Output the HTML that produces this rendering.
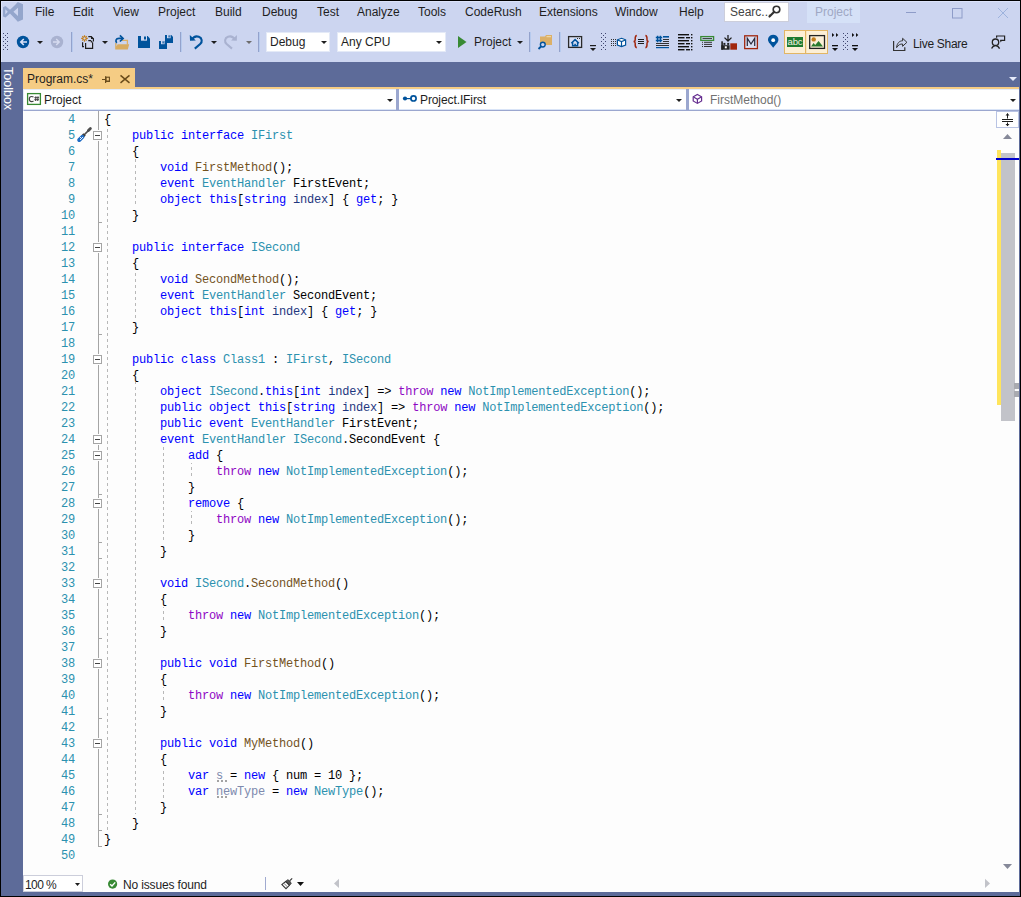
<!DOCTYPE html>
<html><head><meta charset="utf-8">
<style>
*{margin:0;padding:0;box-sizing:border-box}
html,body{width:1021px;height:897px;overflow:hidden;background:#000}
body{position:relative;font-family:"Liberation Sans",sans-serif;font-size:12px;color:#1E1E1E}
.a{position:absolute}
#frame{position:absolute;left:1px;top:1px;width:1019px;height:895px;background:#CCD5F0}
.menu{position:absolute;top:4px;font-size:12px;line-height:16px;color:#1E1E1E;white-space:nowrap}
.sep{position:absolute;width:1px;background:#9BA7CF}
.arr{position:absolute;width:0;height:0;border-left:3px solid transparent;border-right:3px solid transparent;border-top:3px solid #1E1E1E}
.combo{position:absolute;background:#fff;top:32px;height:20px;border:1px solid #E4EAF7}
#tabwell{position:absolute;left:1px;top:62px;width:1019px;height:834px;background:#5D6B99}
#code{position:absolute;left:104px;top:112px;font-family:"Liberation Mono",monospace;font-size:12px;letter-spacing:-0.2px;line-height:16px;white-space:pre;color:#000}
#lnum{position:absolute;left:40px;width:35px;top:112px;font-family:"Liberation Mono",monospace;font-size:12px;letter-spacing:-0.2px;line-height:16px;white-space:pre;color:#2B91AF;text-align:right}
.dg{position:absolute;width:1px;background-image:repeating-linear-gradient(to bottom,transparent 0 3px,#B8B8B8 3px 6px)}
.k{color:#0000FF}.t{color:#2B91AF}.m{color:#74531F}.c{color:#8F08C4}.p{color:#1F377F}.g{color:#7E8AAE}
</style></head><body>
<div id="frame"></div>
<!-- menu -->
<div class="menu" style="left:35px">File</div>
<div class="menu" style="left:73px">Edit</div>
<div class="menu" style="left:113px">View</div>
<div class="menu" style="left:158px">Project</div>
<div class="menu" style="left:215px">Build</div>
<div class="menu" style="left:262px">Debug</div>
<div class="menu" style="left:317px">Test</div>
<div class="menu" style="left:357px">Analyze</div>
<div class="menu" style="left:418px">Tools</div>
<div class="menu" style="left:465px">CodeRush</div>
<div class="menu" style="left:539px">Extensions</div>
<div class="menu" style="left:615px">Window</div>
<div class="menu" style="left:679px">Help</div>
<div class="a" style="left:724px;top:2px;width:65px;height:20px;background:#fff;border:1px solid #CCCEDB"></div>
<div class="menu" style="left:730px;color:#444">Searc...</div>
<div class="a" style="left:807px;top:2px;width:53px;height:21px;background:#D5E1F7"></div>
<div class="menu" style="left:815px;color:#A0A8C4">Project</div>

<!-- toolbar -->
<div class="combo" style="left:266px;width:64px"></div>
<div class="menu" style="left:270px;top:34px">Debug</div>
<div class="combo" style="left:337px;width:109px"></div>
<div class="menu" style="left:341px;top:34px">Any CPU</div>
<div class="menu" style="left:474px;top:34px">Project</div>
<div class="menu" style="left:913px;top:36px;letter-spacing:-0.3px">Live Share</div>

<!-- tab well -->
<div id="tabwell"></div>
<div class="a" style="left:23px;top:68px;width:112px;height:21px;background:#F5CC84"></div>
<div class="a" style="left:23px;top:87px;width:996px;height:2px;background:#F5CC84"></div>
<div class="menu" style="left:27px;top:71px">Program.cs*</div>

<div class="a" style="left:16px;top:67px;font-size:12.5px;line-height:16px;color:#fff;white-space:nowrap;transform:rotate(90deg);transform-origin:0 0">Toolbox</div>
<!-- nav bar -->
<div class="a" style="left:23px;top:89px;width:996px;height:22px;background:#fff;border-top:1px solid #E3ECFA;border-left:1px solid #E3ECFA;border-bottom:1px solid #9BA7CF"></div><div class="a" style="left:23px;top:109px;width:996px;height:1px;background:#D9E4F7"></div>
<div class="a" style="left:396px;top:89px;width:3px;height:21px;background:#9BA7CF"></div>
<div class="a" style="left:686px;top:89px;width:3px;height:21px;background:#9BA7CF"></div>
<div class="menu" style="left:44px;top:92px">Project</div>
<div class="menu" style="left:420px;top:92px;letter-spacing:-0.1px">Project.IFirst</div>
<div class="menu" style="left:710px;top:92px;color:#717171">FirstMethod()</div>

<!-- editor -->
<div class="a" style="left:23px;top:111px;width:996px;height:781px;background:#FDFDFD"></div>

<!--GUTTER-->
<div class="a" style="left:98px;top:111px;width:1px;height:19px;background:#A5A5A5"></div>
<div class="a" style="left:98px;top:141px;width:1px;height:101px;background:#A5A5A5"></div>
<div class="a" style="left:98px;top:253px;width:1px;height:101px;background:#A5A5A5"></div>
<div class="a" style="left:98px;top:365px;width:1px;height:69px;background:#A5A5A5"></div>
<div class="a" style="left:98px;top:445px;width:1px;height:5px;background:#A5A5A5"></div>
<div class="a" style="left:98px;top:461px;width:1px;height:37px;background:#A5A5A5"></div>
<div class="a" style="left:98px;top:509px;width:1px;height:69px;background:#A5A5A5"></div>
<div class="a" style="left:98px;top:589px;width:1px;height:69px;background:#A5A5A5"></div>
<div class="a" style="left:98px;top:669px;width:1px;height:69px;background:#A5A5A5"></div>
<div class="a" style="left:98px;top:749px;width:1px;height:98px;background:#A5A5A5"></div>
<div class="a" style="left:93px;top:131px;width:9px;height:9px;border:1px solid #A5A5A5;background:#fff"></div>
<div class="a" style="left:95px;top:135px;width:5px;height:1px;background:#444"></div>
<div class="a" style="left:93px;top:243px;width:9px;height:9px;border:1px solid #A5A5A5;background:#fff"></div>
<div class="a" style="left:95px;top:247px;width:5px;height:1px;background:#444"></div>
<div class="a" style="left:93px;top:355px;width:9px;height:9px;border:1px solid #A5A5A5;background:#fff"></div>
<div class="a" style="left:95px;top:359px;width:5px;height:1px;background:#444"></div>
<div class="a" style="left:93px;top:435px;width:9px;height:9px;border:1px solid #A5A5A5;background:#fff"></div>
<div class="a" style="left:95px;top:439px;width:5px;height:1px;background:#444"></div>
<div class="a" style="left:93px;top:451px;width:9px;height:9px;border:1px solid #A5A5A5;background:#fff"></div>
<div class="a" style="left:95px;top:455px;width:5px;height:1px;background:#444"></div>
<div class="a" style="left:93px;top:499px;width:9px;height:9px;border:1px solid #A5A5A5;background:#fff"></div>
<div class="a" style="left:95px;top:503px;width:5px;height:1px;background:#444"></div>
<div class="a" style="left:93px;top:579px;width:9px;height:9px;border:1px solid #A5A5A5;background:#fff"></div>
<div class="a" style="left:95px;top:583px;width:5px;height:1px;background:#444"></div>
<div class="a" style="left:93px;top:659px;width:9px;height:9px;border:1px solid #A5A5A5;background:#fff"></div>
<div class="a" style="left:95px;top:663px;width:5px;height:1px;background:#444"></div>
<div class="a" style="left:93px;top:739px;width:9px;height:9px;border:1px solid #A5A5A5;background:#fff"></div>
<div class="a" style="left:95px;top:743px;width:5px;height:1px;background:#444"></div>
<div class="a" style="left:99px;top:222px;width:3px;height:1px;background:#A5A5A5"></div>
<div class="a" style="left:99px;top:334px;width:3px;height:1px;background:#A5A5A5"></div>
<div class="a" style="left:99px;top:830px;width:3px;height:1px;background:#A5A5A5"></div>
<div class="a" style="left:99px;top:558px;width:3px;height:1px;background:#A5A5A5"></div>
<div class="a" style="left:99px;top:494px;width:3px;height:1px;background:#A5A5A5"></div>
<div class="a" style="left:99px;top:542px;width:3px;height:1px;background:#A5A5A5"></div>
<div class="a" style="left:99px;top:638px;width:3px;height:1px;background:#A5A5A5"></div>
<div class="a" style="left:99px;top:718px;width:3px;height:1px;background:#A5A5A5"></div>
<div class="a" style="left:99px;top:814px;width:3px;height:1px;background:#A5A5A5"></div>
<div class="a" style="left:99px;top:846px;width:3px;height:1px;background:#A5A5A5"></div>
<div class="a dg" style="left:107px;top:126px;height:704px;background-position:0 -126px"></div>
<div class="a dg" style="left:135px;top:158px;height:48px;background-position:0 -158px"></div>
<div class="a dg" style="left:135px;top:270px;height:48px;background-position:0 -270px"></div>
<div class="a dg" style="left:135px;top:382px;height:432px;background-position:0 -382px"></div>
<div class="a dg" style="left:163px;top:446px;height:96px;background-position:0 -446px"></div>
<div class="a dg" style="left:191px;top:462px;height:16px;background-position:0 -462px"></div>
<div class="a dg" style="left:191px;top:510px;height:16px;background-position:0 -510px"></div>
<div class="a dg" style="left:163px;top:606px;height:16px;background-position:0 -606px"></div>
<div class="a dg" style="left:163px;top:686px;height:16px;background-position:0 -686px"></div>
<div class="a dg" style="left:163px;top:766px;height:32px;background-position:0 -766px"></div>
<!--/GUTTER-->
<div id="lnum">4
5
6
7
8
9
10
11
12
13
14
15
16
17
18
19
20
21
22
23
24
25
26
27
28
29
30
31
32
33
34
35
36
37
38
39
40
41
42
43
44
45
46
47
48
49
50</div>
<div id="code">{
    <span class="k">public interface</span> <span class="t">IFirst</span>
    {
        <span class="k">void</span> <span class="m">FirstMethod</span>();
        <span class="k">event</span> <span class="t">EventHandler</span> FirstEvent;
        <span class="k">object this</span>[<span class="k">string</span> <span class="p">index</span>] { <span class="k">get</span>; }
    }

    <span class="k">public interface</span> <span class="t">ISecond</span>
    {
        <span class="k">void</span> <span class="m">SecondMethod</span>();
        <span class="k">event</span> <span class="t">EventHandler</span> SecondEvent;
        <span class="k">object this</span>[<span class="k">int</span> <span class="p">index</span>] { <span class="k">get</span>; }
    }

    <span class="k">public class</span> <span class="t">Class1</span> : <span class="t">IFirst</span>, <span class="t">ISecond</span>
    {
        <span class="k">object</span> <span class="t">ISecond</span>.<span class="k">this</span>[<span class="k">int</span> <span class="p">index</span>] =&gt; <span class="c">throw</span> <span class="k">new</span> <span class="t">NotImplementedException</span>();
        <span class="k">public object this</span>[<span class="k">string</span> <span class="p">index</span>] =&gt; <span class="c">throw</span> <span class="k">new</span> <span class="t">NotImplementedException</span>();
        <span class="k">public event</span> <span class="t">EventHandler</span> FirstEvent;
        <span class="k">event</span> <span class="t">EventHandler</span> <span class="t">ISecond</span>.SecondEvent {
            <span class="k">add</span> {
                <span class="c">throw</span> <span class="k">new</span> <span class="t">NotImplementedException</span>();
            }
            <span class="k">remove</span> {
                <span class="c">throw</span> <span class="k">new</span> <span class="t">NotImplementedException</span>();
            }
        }

        <span class="k">void</span> <span class="t">ISecond</span>.<span class="m">SecondMethod</span>()
        {
            <span class="c">throw</span> <span class="k">new</span> <span class="t">NotImplementedException</span>();
        }

        <span class="k">public void</span> <span class="m">FirstMethod</span>()
        {
            <span class="c">throw</span> <span class="k">new</span> <span class="t">NotImplementedException</span>();
        }

        <span class="k">public void</span> <span class="m">MyMethod</span>()
        {
            <span class="k">var</span> <span class="g">s</span> = <span class="k">new</span> { num = 10 };
            <span class="k">var</span> <span class="g">newType</span> = <span class="k">new</span> <span class="t">NewType</span>();
        }
    }
}
</div>

<!-- status bar -->
<div class="a" style="left:23px;top:875px;width:60px;height:17px;background:#fff;border:1px solid #CCCEDB"></div>
<div class="menu" style="left:25px;top:877px;letter-spacing:-0.6px">100 %</div>
<div class="menu" style="left:123px;top:877px;letter-spacing:-0.15px">No issues found</div>
<!--ICONS-->
<svg class="a" style="left:0;top:0" width="1021" height="897" viewBox="0 0 1021 897">
<!-- window highlight -->
<rect x="1" y="1" width="1019" height="1" fill="#DCE3FA"/>
<rect x="1" y="1" width="1" height="61" fill="#DCE3FA"/>
<!-- VS logo -->
<path fill="#94A6CC" fill-rule="evenodd" d="M3,7.3 L5.5,6 L10,9.8 L15.3,4.8 L17.8,2 L23,4.2 L23,19.6 L17.8,21.8 L15.3,19 L10,13.6 L5.5,17.6 L3,16.4 Z M5.3,9.2 L7.8,11.8 L5.3,14.5 Z M18,7.8 L13.4,11.8 L18,15.9 Z"/>
<!-- window buttons -->
<rect x="906" y="12" width="10" height="1" fill="#8E9CC8"/>
<rect x="952.5" y="8.5" width="9.5" height="9.5" fill="none" stroke="#8E9CC8" stroke-width="1"/>
<path d="M998,8 L1008,18 M1008,8 L998,18" stroke="#9DB3DD" stroke-width="1"/>
<!-- search magnifier -->
<circle cx="776.5" cy="9.5" r="3.3" fill="none" stroke="#333" stroke-width="1.6"/>
<path d="M774,12 L769.5,16.5" stroke="#333" stroke-width="2.2" stroke-linecap="round"/>
<!-- grips -->
<g fill="#3F4570">
<rect x="3" y="33" width="1" height="1"/><rect x="7" y="33" width="1" height="1"/><rect x="5" y="35" width="1" height="1"/>
<rect x="3" y="37" width="1" height="1"/><rect x="7" y="37" width="1" height="1"/><rect x="5" y="39" width="1" height="1"/>
<rect x="3" y="41" width="1" height="1"/><rect x="7" y="41" width="1" height="1"/><rect x="5" y="43" width="1" height="1"/>
<rect x="3" y="45" width="1" height="1"/><rect x="7" y="45" width="1" height="1"/><rect x="5" y="47" width="1" height="1"/>
<rect x="3" y="49" width="1" height="1"/><rect x="7" y="49" width="1" height="1"/>
<rect x="601" y="33" width="1" height="1"/><rect x="605" y="33" width="1" height="1"/><rect x="603" y="35" width="1" height="1"/>
<rect x="601" y="37" width="1" height="1"/><rect x="605" y="37" width="1" height="1"/><rect x="603" y="39" width="1" height="1"/>
<rect x="601" y="41" width="1" height="1"/><rect x="605" y="41" width="1" height="1"/><rect x="603" y="43" width="1" height="1"/>
<rect x="601" y="45" width="1" height="1"/><rect x="605" y="45" width="1" height="1"/><rect x="603" y="47" width="1" height="1"/>
<rect x="601" y="49" width="1" height="1"/><rect x="605" y="49" width="1" height="1"/>
<rect x="843" y="33" width="1" height="1"/><rect x="847" y="33" width="1" height="1"/><rect x="845" y="35" width="1" height="1"/>
<rect x="843" y="37" width="1" height="1"/><rect x="847" y="37" width="1" height="1"/><rect x="845" y="39" width="1" height="1"/>
<rect x="843" y="41" width="1" height="1"/><rect x="847" y="41" width="1" height="1"/><rect x="845" y="43" width="1" height="1"/>
<rect x="843" y="45" width="1" height="1"/><rect x="847" y="45" width="1" height="1"/><rect x="845" y="47" width="1" height="1"/>
<rect x="843" y="49" width="1" height="1"/><rect x="847" y="49" width="1" height="1"/>
</g>
<!-- back / forward -->
<circle cx="23" cy="42" r="6.2" fill="#00539C"/>
<path d="M27,42 H21.5 M23.8,39 L20.8,42 L23.8,45" stroke="#DCE3F7" stroke-width="1.6" fill="none"/>
<path d="M37,41 H43 L40,44 Z" fill="#1E1E1E"/>
<circle cx="57" cy="42" r="6.2" fill="#A9B2D0"/>
<path d="M53,42 H58.5 M56.2,39 L59.2,42 L56.2,45" stroke="#D6DCF0" stroke-width="1.4" fill="none"/>
<!-- separators -->
<g fill="#93A2CC">
<rect x="71" y="32" width="1" height="20"/><rect x="180" y="32" width="1" height="20"/><rect x="258" y="32" width="1" height="20"/>
<rect x="529" y="32" width="1" height="20"/><rect x="559" y="32" width="1" height="20"/>
</g>
<g fill="#B6CAEE"><rect x="72" y="32" width="1" height="20"/><rect x="181" y="32" width="1" height="20"/><rect x="259" y="32" width="1" height="20"/><rect x="530" y="32" width="1" height="20"/><rect x="560" y="32" width="1" height="20"/></g>
<!-- new project -->
<g stroke="#C27D1A" stroke-width="1.2" fill="none">
<path d="M81.2,38.4 H87.8 M84.5,35.2 V41.8 M82.3,36.3 L86.7,40.5 M86.7,36.3 L82.3,40.5"/>
</g>
<circle cx="84.5" cy="38.4" r="1.1" fill="#CCD5F0"/>
<path d="M88.3,36.6 H91.2 L93.4,38.8 V41.4" stroke="#1E1E1E" stroke-width="1.2" fill="none"/>
<path d="M91,36 L94,39 H91 Z" fill="#1E1E1E"/>
<path d="M85.6,43 V48.4 H92.6 V42.6 L91,41 H88.3 V43 Z" fill="#D3D8EE"/>
<path d="M85.6,43 V48.4 H92.6 V42.6 M88.3,40.6 H91" stroke="#1E1E1E" stroke-width="1.2" fill="none"/>
<path d="M90.8,40 L93.2,42.4 H90.8 Z" fill="#1E1E1E"/>
<path d="M82.6,42.3 V46.6 H84" stroke="#1E1E1E" stroke-width="1.2" fill="none"/>
<path d="M102,41 H108 L105,44 Z" fill="#1E1E1E"/>
<!-- open folder -->
<path d="M121.8,40.4 H127.4 V44.5" stroke="#DCB067" stroke-width="1.3" fill="none"/>
<path d="M115.2,43 V49.6 H127.8 L129.2,44.2 H117.6 L116.5,46.5 V43 Z" fill="#D8AC62"/>
<path d="M116.8,42.8 C115.3,41.3 115.6,38.5 119,38.4 H122.6" stroke="#00539C" stroke-width="1.7" fill="none"/>
<path d="M119.9,35.3 L123.1,38.4 L119.9,41.5" stroke="#00539C" stroke-width="1.7" fill="none"/>
<!-- save -->
<path d="M138,36 H147.6 L150,38.4 V48 H138 Z" fill="#00539C"/>
<rect x="141" y="36" width="6" height="4.7" fill="#D0D8F0"/>
<rect x="144" y="36.5" width="2" height="3" fill="#00539C"/>
<!-- save all -->
<path d="M165,35 H171.3 L173,36.7 V43 H165 Z" fill="#00539C"/>
<rect x="167" y="35" width="3.6" height="3.2" fill="#D0D8F0"/><rect x="168.5" y="35.3" width="1.2" height="2.2" fill="#00539C"/>
<path d="M159,41 H165.3 L167,42.7 V49 H159 Z" fill="#00539C" stroke="#CCD5F0" stroke-width="0"/>
<rect x="161" y="41" width="3.6" height="3.2" fill="#D0D8F0"/><rect x="162.5" y="41.3" width="1.2" height="2.2" fill="#00539C"/>
<!-- undo -->
<path d="M191.8,39.8 C193.5,36.8 196.5,36 198.8,36.8 C202.3,38 202.5,42 200.2,44 L194.8,48.6" stroke="#00539C" stroke-width="2.1" fill="none"/>
<path d="M189.8,35 L190,40.8 L195.8,40.6 Z" fill="#00539C"/>
<path d="M211,41 H217 L214,44 Z" fill="#1E1E1E"/>
<!-- redo -->
<path d="M235,39.8 C233.3,36.8 230.3,36 228,36.8 C224.5,38 224.3,42 226.6,44 L232,48.6" stroke="#A9B2D0" stroke-width="2.1" fill="none"/>
<path d="M237,35 L236.8,40.8 L231,40.6 Z" fill="#A9B2D0"/>
<path d="M246,41 H252 L249,44 Z" fill="#6D6D6D"/>
<!-- combo arrows -->
<path d="M321,41 H327 L324,44 Z" fill="#1E1E1E"/>
<path d="M436,41 H442 L439,44 Z" fill="#1E1E1E"/>
<!-- play -->
<path d="M458,36 V48 L466.5,42 Z" fill="#388A34"/>
<path d="M517,41 H523 L520,44 Z" fill="#1E1E1E"/>
<!-- find in files -->
<path d="M540,36.5 H545 L546,35 H552 V45 H540 Z" fill="#DCB067"/>
<path d="M546.5,36.7 H551" stroke="#F2DFB5" stroke-width="1"/>
<circle cx="542.8" cy="44.6" r="2.4" fill="#CCD5F0" stroke="#00539C" stroke-width="1.4"/>
<path d="M541,46.5 L538.5,49" stroke="#00539C" stroke-width="1.8"/>
<!-- home window -->
<rect x="568.6" y="36.6" width="13" height="10.8" fill="#D9E0F4" stroke="#2A2A2A" stroke-width="1.3"/>
<path d="M571.3,43.2 L575.1,39.6 L578.9,43.2 M572.6,42.4 V45.8 H577.6 V42.4" stroke="#00539C" stroke-width="1.5" fill="none"/>
<rect x="574.3" y="43.8" width="1.6" height="2" fill="#00539C"/>
<rect x="577" y="38" width="1" height="1" fill="#333"/><rect x="579" y="38" width="1" height="1" fill="#333"/>
<rect x="590" y="45" width="6" height="1.2" fill="#1E1E1E"/>
<path d="M590,48 H596 L593,51 Z" fill="#1E1E1E"/>
<!-- grid + cube -->
<g fill="#333">
<rect x="611" y="39" width="1" height="1"/><rect x="613" y="39" width="1" height="1"/><rect x="615" y="39" width="1" height="1"/>
<rect x="611" y="41" width="1" height="1"/><rect x="613" y="41" width="1" height="1"/><rect x="615" y="41" width="1" height="1"/>
<rect x="611" y="43" width="1" height="1"/><rect x="613" y="43" width="1" height="1"/><rect x="615" y="43" width="1" height="1"/>
<rect x="611" y="45" width="1" height="1"/><rect x="613" y="45" width="1" height="1"/><rect x="615" y="45" width="1" height="1"/>
</g>
<path d="M621.5,38.3 L625.6,39.8 V45 L621.5,46.6 L617.4,45 V39.8 Z" fill="#fff" stroke="#00539C" stroke-width="1.2"/>
<path d="M617.6,40 L621.5,41.5 L625.4,40 M621.5,41.5 V46.4" stroke="#00539C" stroke-width="1.2" fill="none"/>
<!-- {=} -->
<path d="M636.8,35.4 C634.8,35.6 635.2,38 635.2,40 C635.2,41 634.6,41.5 633.6,41.6 C634.6,41.7 635.2,42.2 635.2,43.2 C635.2,45.2 634.8,47.6 636.8,47.8" stroke="#A1260D" stroke-width="1.5" fill="none"/>
<path d="M645.4,35.4 C647.4,35.6 647,38 647,40 C647,41 647.6,41.5 648.6,41.6 C647.6,41.7 647,42.2 647,43.2 C647,45.2 647.4,47.6 645.4,47.8" stroke="#A1260D" stroke-width="1.5" fill="none"/>
<g fill="#1E1E1E"><rect x="638" y="39" width="6" height="1"/><rect x="638" y="41" width="6" height="1"/><rect x="638" y="43" width="6" height="1"/></g>
<!-- #= -->
<path d="M657.6,35.8 V42.2 M660.4,35.8 V42.2 M655.8,37.6 H662.2 M655.8,40.4 H662.2" stroke="#00539C" stroke-width="1.5" fill="none"/>
<rect x="663" y="36" width="6" height="1.6" fill="#00539C"/>
<path d="M663,39.5 H669 M663,41.5 H669 M656,43.5 H669 M656,45.5 H669" stroke="#333" stroke-width="1"/>
<rect x="656" y="47" width="13" height="1.2" fill="#00539C"/>
<!-- lines icon -->
<g fill="#111"><rect x="678" y="34" width="11" height="1.4"/><rect x="691" y="34" width="1.4" height="1.4"/><rect x="678" y="37" width="6.5" height="1.4"/><rect x="686" y="37" width="4" height="1.4"/><rect x="691" y="37" width="1.4" height="1.4"/><rect x="678" y="40" width="11" height="1.4"/><rect x="691" y="40" width="1.4" height="1.4"/><rect x="678" y="43" width="6.5" height="1.4"/><rect x="686" y="43" width="4" height="1.4"/><rect x="691" y="43" width="1.4" height="1.4"/><rect x="678" y="46" width="11" height="1.4"/><rect x="691" y="46" width="1.4" height="1.4"/><rect x="678" y="49" width="6.5" height="1.4"/><rect x="686" y="49" width="4" height="1.4"/><rect x="691" y="49" width="1.4" height="1.4"/></g>
<!-- green box list -->
<rect x="700.8" y="36.6" width="12.8" height="3.8" fill="none" stroke="#388A34" stroke-width="1.3"/>
<path d="M702.5,38.5 H712" stroke="#333" stroke-width="0.9"/>
<path d="M704,42.3 H712 M704,44.4 H712 M704,46.5 H712" stroke="#333" stroke-width="1"/>
<g fill="#333"><rect x="702" y="41.8" width="1" height="1"/><rect x="702" y="43.9" width="1" height="1"/><rect x="702" y="46" width="1" height="1"/></g>
<!-- download -->
<path d="M728,35 V40.5 M724.5,37.6 L728,41 L731.5,37.6" stroke="#1E1E1E" stroke-width="1.3" fill="none"/>
<rect x="721.3" y="41.3" width="1.6" height="8.4" fill="#222"/>
<rect x="721.3" y="45.2" width="8.3" height="4.5" fill="#222"/>
<rect x="723.4" y="42.9" width="2" height="2" fill="#222"/><rect x="727.2" y="42.9" width="2" height="2" fill="#222"/>
<rect x="724.8" y="46.3" width="2" height="2" fill="#fff"/>
<rect x="730.3" y="43.3" width="6.7" height="6.4" fill="#A1260D"/>
<!-- M -->
<rect x="744.7" y="35.8" width="12.7" height="12.8" fill="#D9E0F4" stroke="#A1260D" stroke-width="1.3"/>
<path d="M747.3,46 V38.3 L751,44 L754.7,38.3 V46" stroke="#2A2A3A" stroke-width="1.2" fill="none"/>
<!-- pin -->
<path d="M773.2,47.8 L768.8,42.3 C766.8,39.5 768.6,34.8 773.2,34.8 C777.8,34.8 779.6,39.5 777.6,42.3 Z" fill="#00539C"/>
<circle cx="773.2" cy="40.2" r="1.9" fill="#fff"/>
<!-- abc / image buttons -->
<rect x="784.5" y="30.5" width="43" height="23" fill="#FCEFD6" stroke="#E2B665" stroke-width="1"/>
<rect x="805" y="30.5" width="1.2" height="23" fill="#E2B665"/>
<rect x="787" y="37" width="16" height="10" fill="#1F7A2F"/>
<text x="795" y="44.8" font-family="Liberation Sans" font-size="9.5" fill="#F4F0E0" text-anchor="middle" letter-spacing="-0.1">abc</text>
<rect x="809.7" y="35.6" width="14.8" height="12.8" fill="#FCEFD6" stroke="#222" stroke-width="1.3"/>
<circle cx="813.7" cy="39.4" r="2.2" fill="#C27D1A"/>
<path d="M811,46.6 L813.6,43 L815.2,45 L818.6,41 L823,46.6 Z" fill="#2A7A2E"/>
<!-- overflow arrows -->
<path d="M832,33 L834.3,35 L832,37 Z M836,33 L838.3,35 L836,37 Z" fill="#111"/>
<rect x="832" y="45" width="6" height="1.3" fill="#111"/>
<path d="M832,48 H838 L835,51 Z" fill="#111"/>
<path d="M852,33 L854.3,35 L852,37 Z M856,33 L858.3,35 L856,37 Z" fill="#111"/>
<rect x="852" y="45" width="6" height="1.3" fill="#111"/>
<path d="M852,48 H858 L855,51 Z" fill="#111"/>
<!-- share -->
<path d="M893.6,41 V50.5 H904.8 V47.3" stroke="#333" stroke-width="1.2" fill="none"/>
<path d="M896.6,47.6 C897,43.2 899.4,40.8 902.6,40.8 V38.3 L906.9,42.3 L902.6,46.3 V44 C900.2,43.8 898.2,45 896.6,47.6 Z" stroke="#333" stroke-width="1" fill="none"/>
<!-- feedback -->
<circle cx="995.5" cy="42.2" r="3.2" fill="none" stroke="#222" stroke-width="1.3"/>
<path d="M991.6,48.6 C992.6,46.3 993.8,45.6 995.5,45.6 C997.2,45.6 998.5,46.3 999.6,48.6" stroke="#222" stroke-width="1.3" fill="none"/>
<path d="M996.6,37.8 V36 H1004.6 V40.4 H1000.2" stroke="#222" stroke-width="1.2" fill="none"/>
<path d="M1000.2,40.2 H1002.4 L1000.4,42.4 Z" fill="#222"/>
<!-- tab pin & close -->
<path d="M102,79.5 H105.5 M105.6,76.3 V83" stroke="#6A4C1C" stroke-width="1.2"/>
<rect x="106" y="77.2" width="3.4" height="4.2" fill="none" stroke="#6A4C1C" stroke-width="1.1"/>
<rect x="106" y="80.6" width="4" height="1.3" fill="#6A4C1C"/>
<path d="M120.5,75.4 L129.5,82.8 M129.5,75.4 L120.5,82.8" stroke="#6A4C1C" stroke-width="1.5"/>
<!-- tab well dropdown -->
<path d="M1009,77 H1017 L1013,81 Z" fill="#E6EBFA"/>
<!-- nav bar icons -->
<rect x="27.6" y="93.6" width="12.8" height="10.8" fill="#fff" stroke="#388A34" stroke-width="1.3"/>
<path d="M33.5,97.2 C33,96.7 32.4,96.5 31.6,96.5 C30.1,96.5 29.3,97.6 29.3,99.1 C29.3,100.6 30.1,101.6 31.6,101.6 C32.4,101.6 33,101.4 33.5,100.9" stroke="#424242" stroke-width="1.2" fill="none"/><path d="M35.9,96.3 L35.6,101 M38,96.3 L37.7,101 M34.4,97.7 H39.1 M34.3,99.7 H39" stroke="#424242" stroke-width="1"/>
<path d="M387,99 H393 L390,102 Z" fill="#1E1E1E"/>
<circle cx="405" cy="98.5" r="2.1" fill="#00539C"/>
<rect x="406.5" y="98" width="5" height="1.2" fill="#00539C"/>
<circle cx="413.5" cy="98.4" r="2.6" fill="none" stroke="#00539C" stroke-width="1.7"/>
<path d="M676,99 H682 L679,102 Z" fill="#1E1E1E"/>
<path d="M697.4,94.4 L701.6,96.8 V101 L697.4,103.4 L693.2,101 V96.8 Z" fill="none" stroke="#652D90" stroke-width="1.2"/>
<path d="M693.6,97 L697.4,99.2 L701.2,97 M697.4,99.2 V103" stroke="#652D90" stroke-width="1.2" fill="none"/>
<path d="M1010,99 H1016 L1013,102 Z" fill="#1E1E1E"/>
<!-- screwdriver -->
<path d="M89.6,129.4 L84,135" stroke="#4E4E4E" stroke-width="1.7"/>
<path d="M90.4,128.6 L88.4,130.6" stroke="#4E4E4E" stroke-width="2.8" stroke-linecap="round"/>
<path d="M84.6,134.4 L82.6,136.4" stroke="#3E3E3E" stroke-width="3.2"/>
<path d="M82.4,136.8 L79.2,140" stroke="#1F6CC4" stroke-width="4" stroke-linecap="round"/>
<g fill="#E8F0FA"><rect x="80" y="137" width="1" height="1"/><rect x="82" y="137" width="1" height="1"/><rect x="81" y="138" width="1" height="1"/><rect x="80" y="139" width="1" height="1"/></g>
<!-- status bar -->
<path d="M75,883 H80 L77.5,886 Z" fill="#1E1E1E"/>
<circle cx="112.6" cy="884.1" r="4.6" fill="#388A34"/>
<path d="M110.2,884.2 L112,886 L115.2,882.4" stroke="#fff" stroke-width="1.4" fill="none"/>
<rect x="265" y="877" width="1" height="13" fill="#A0AAD0"/>
<path d="M292.2,878.3 L289.6,880.9" stroke="#333" stroke-width="1.1"/>
<path d="M287.4,879.9 C288.6,879.6 290.6,881.6 291.2,883.6 L289.6,885.2 L285.7,881.4 Z" fill="#555" stroke="#333" stroke-width="0.8"/>
<path d="M285.7,881.6 L289.4,885.3 L286,888.7 L281.9,884.6 Z" fill="#fff" stroke="#333" stroke-width="1.1"/>
<path d="M283.9,883.3 L287.6,887" stroke="#777" stroke-width="1"/>
<path d="M297,882 H304 L300.5,886 Z" fill="#111"/>
<path d="M339,878.8 V888 L334,883.4 Z" fill="#C2C3C9"/>
<path d="M985,878.8 V888 L990,883.4 Z" fill="#C2C3C9"/>
<!-- vertical scrollbar -->
<rect x="996.5" y="111.5" width="22" height="16" fill="#fff" stroke="#B9C4E4" stroke-width="1"/>
<path d="M1002,119.5 H1013 M1002,121.5 H1013" stroke="#1E1E1E" stroke-width="1"/>
<path d="M1007.5,113.5 V118.5 M1007.5,122.5 V126" stroke="#1E1E1E" stroke-width="1"/>
<path d="M1005.5,115.5 L1007.5,113.2 L1009.5,115.5 Z M1005.5,124 L1007.5,126.3 L1009.5,124 Z" fill="#1E1E1E"/>
<path d="M1003,139 H1012 L1007.5,134 Z" fill="#868999"/>
<path d="M1003,864 H1012 L1007.5,869 Z" fill="#868999"/>
<rect x="1001" y="153" width="14" height="268" fill="#C2C3C9"/>
<rect x="997" y="150" width="4" height="255" fill="#FFE55C"/>
<rect x="996" y="158" width="23" height="2" fill="#0000CC"/>
<rect x="1014" y="383" width="5" height="6" fill="#A9AAB0"/>
<rect x="1014" y="391" width="5" height="6" fill="#A9AAB0"/>
<g fill="#A3A3A3"><rect x="217" y="780" width="2" height="2"/><rect x="221" y="780" width="2" height="2"/><rect x="225" y="780" width="2" height="2"/>
<rect x="217" y="796" width="2" height="2"/><rect x="221" y="796" width="2" height="2"/><rect x="225" y="796" width="2" height="2"/></g>
</svg>
<!--/ICONS-->
</body></html>
